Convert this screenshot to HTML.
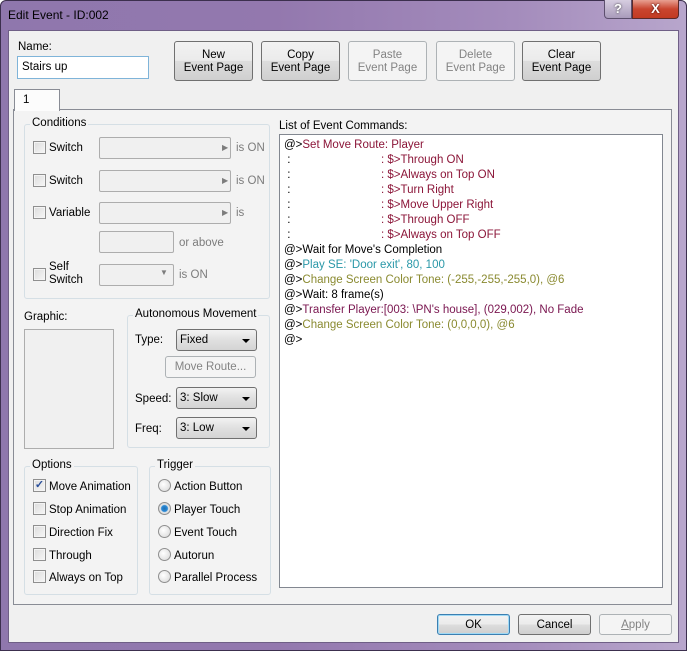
<!DOCTYPE html>
<html><head><meta charset="utf-8"><style>
*{box-sizing:border-box;margin:0;padding:0}
body{width:687px;height:651px;overflow:hidden;font-family:"Liberation Sans",sans-serif;font-size:11.5px;color:#000;background:#fff}
.a{position:absolute}
.frame{left:0;top:0;width:687px;height:651px;background:linear-gradient(90deg,#8f77ad 0%,#9378ae 40%,#a48cbc 75%,#b8a6cc 100%);border:1px solid #3c2f4e;border-radius:6px 6px 0 0}
.client{left:8px;top:30px;width:671px;height:613px;background:#f0f0f0;border:1px solid #6f5f86}
.btn{position:absolute;border:1px solid #707070;border-radius:3px;background:linear-gradient(#f2f2f2 0%,#ebebeb 49%,#dddddd 50%,#cfcfcf 100%);text-align:center;line-height:13px;font-size:11.5px}
.dis{border-color:#adb2b5;background:#f4f4f4;color:#838383}
.grp{position:absolute;border:1px solid #d5dfe5;border-radius:3px}
.lg{position:absolute;background:#f3f3f3;padding:0 2px;top:-8px;left:5px}
.cb{position:absolute;width:13px;height:13px;border:1px solid #8f8f8f;background:linear-gradient(135deg,#dcdcdc,#f6f6f6);box-shadow:inset 0 0 0 1px #f4f4f4}
.rb{position:absolute;width:13px;height:13px;border:1px solid #8f8f8f;border-radius:50%;background:radial-gradient(circle at 40% 40%,#fff,#d6d6d6)}
.combo{position:absolute;border:1px solid #adadad;background:#f0f0f0;border-radius:2px}
.dd{position:absolute;border:1px solid #707070;border-radius:3px;background:linear-gradient(#f2f2f2,#e0e0e0 50%,#d4d4d4);padding-left:3px;line-height:21px}
.dd:after{content:"";position:absolute;right:6px;top:9px;border-left:4px solid transparent;border-right:4px solid transparent;border-top:4px solid #000}
.t{position:absolute;white-space:nowrap}
.g{color:#7c7c7c}
.list div{height:15px;line-height:15px;white-space:nowrap}
.m{color:#8b1538}.c{color:#2a98a8}.o{color:#8a8a30}.p{color:#7a1650}
</style></head><body>
<div class="a frame"></div>
<div class="t" style="left:8px;top:8px;font-size:12px">Edit Event - ID:002</div>
<div class="a" style="left:604px;top:0;width:28px;height:19px;border:1px solid #5d4f6e;border-top:none;border-radius:0 0 0 4px;background:linear-gradient(#d6cde0,#a99bbb);color:#fff;font-weight:bold;text-align:center;line-height:17px;font-size:13px;text-shadow:0 0 2px #333">?</div>
<div class="a" style="left:632px;top:0;width:47px;height:19px;border:1px solid #5a2a2a;border-top:none;border-radius:0 0 4px 0;background:linear-gradient(#e8a091,#c9452f 50%,#c23a22);color:#fff;font-weight:bold;text-align:center;line-height:17px;font-size:13px;text-shadow:0 0 2px #300">X</div>
<div class="a client"></div>

<div class="t" style="left:18px;top:41px">Name:</div>
<div class="a" style="left:17px;top:56px;width:132px;height:23px;border:1px solid #7fb4d9;background:#fff;padding:4px 0 0 4px">Stairs up</div>
<div class="btn" style="left:174px;top:41px;width:79px;height:40px;padding-top:7px">New<br>Event Page</div>
<div class="btn" style="left:261px;top:41px;width:79px;height:40px;padding-top:7px">Copy<br>Event Page</div>
<div class="btn dis" style="left:348px;top:41px;width:79px;height:40px;padding-top:7px">Paste<br>Event Page</div>
<div class="btn dis" style="left:436px;top:41px;width:79px;height:40px;padding-top:7px">Delete<br>Event Page</div>
<div class="btn" style="left:522px;top:41px;width:79px;height:40px;padding-top:7px">Clear<br>Event Page</div>

<div class="a" style="left:13px;top:109px;width:659px;height:496px;border:1px solid #898c95;background:#f3f3f3"></div>
<div class="a" style="left:14px;top:89px;width:46px;height:22px;border:1px solid #898c95;border-bottom:none;background:#fcfcfc;padding:4px 0 0 8px">1</div>

<div class="grp" style="left:24px;top:124px;width:246px;height:175px"><span class="lg">Conditions</span></div>
<div class="cb" style="left:33px;top:141px"></div><div class="t" style="left:49px;top:142px">Switch</div>
<div class="combo" style="left:99px;top:137px;width:132px;height:22px"></div><div class="t g" style="left:222px;top:143px;font-size:8px">▶</div><div class="t g" style="left:236px;top:142px">is ON</div>
<div class="cb" style="left:33px;top:174px"></div><div class="t" style="left:49px;top:175px">Switch</div>
<div class="combo" style="left:99px;top:170px;width:132px;height:22px"></div><div class="t g" style="left:222px;top:176px;font-size:8px">▶</div><div class="t g" style="left:236px;top:175px">is ON</div>
<div class="cb" style="left:33px;top:206px"></div><div class="t" style="left:49px;top:207px">Variable</div>
<div class="combo" style="left:99px;top:202px;width:132px;height:22px"></div><div class="t g" style="left:222px;top:208px;font-size:8px">▶</div><div class="t g" style="left:236px;top:207px">is</div>
<div class="combo" style="left:99px;top:231px;width:75px;height:22px"></div><div class="t g" style="left:179px;top:237px">or above</div>
<div class="cb" style="left:33px;top:268px"></div><div class="t" style="left:49px;top:261px;line-height:13px">Self<br>Switch</div>
<div class="combo" style="left:99px;top:264px;width:75px;height:22px"></div><div class="t g" style="left:160px;top:268px;font-size:8px">▼</div><div class="t g" style="left:179px;top:269px">is ON</div>

<div class="t" style="left:24px;top:311px">Graphic:</div>
<div class="a" style="left:24px;top:329px;width:90px;height:120px;border:1px solid #adadad;background:#f0f0f0"></div>

<div class="grp" style="left:127px;top:315px;width:143px;height:133px"><span class="lg">Autonomous Movement</span></div>
<div class="t" style="left:135px;top:334px">Type:</div>
<div class="dd" style="left:176px;top:329px;width:81px;height:22px">Fixed</div>
<div class="btn dis" style="left:165px;top:356px;width:91px;height:22px;line-height:21px">Move Route...</div>
<div class="t" style="left:135px;top:393px">Speed:</div>
<div class="dd" style="left:176px;top:387px;width:81px;height:22px">3: Slow</div>
<div class="t" style="left:135px;top:423px">Freq:</div>
<div class="dd" style="left:176px;top:417px;width:81px;height:22px">3: Low</div>

<div class="grp" style="left:24px;top:466px;width:114px;height:129px"><span class="lg">Options</span></div>
<div class="cb" style="left:33px;top:479px;color:#2a4f9a;font-size:11px;line-height:11px;text-align:center;font-weight:bold">✓</div><div class="t" style="left:49px;top:481px">Move Animation</div>
<div class="cb" style="left:33px;top:502px"></div><div class="t" style="left:49px;top:504px">Stop Animation</div>
<div class="cb" style="left:33px;top:525px"></div><div class="t" style="left:49px;top:527px">Direction Fix</div>
<div class="cb" style="left:33px;top:548px"></div><div class="t" style="left:49px;top:550px">Through</div>
<div class="cb" style="left:33px;top:570px"></div><div class="t" style="left:49px;top:572px">Always on Top</div>

<div class="grp" style="left:149px;top:466px;width:122px;height:129px"><span class="lg">Trigger</span></div>
<div class="rb" style="left:158px;top:479px"></div><div class="t" style="left:174px;top:481px">Action Button</div>
<div class="rb" style="left:158px;top:502px;background:radial-gradient(circle,#1f6fb4 0,#2b8ad6 3px,#e8e8e8 4px,#d0d0d0 6px)"></div><div class="t" style="left:174px;top:504px">Player Touch</div>
<div class="rb" style="left:158px;top:525px"></div><div class="t" style="left:174px;top:527px">Event Touch</div>
<div class="rb" style="left:158px;top:548px"></div><div class="t" style="left:174px;top:550px">Autorun</div>
<div class="rb" style="left:158px;top:570px"></div><div class="t" style="left:174px;top:572px">Parallel Process</div>

<div class="t" style="left:279px;top:120px">List of Event Commands:</div>
<div class="a list" style="left:279px;top:134px;width:384px;height:454px;border:1px solid #828790;background:#fff;padding:3px 0 0 4px">
<div>@&gt;<span class="m">Set Move Route: Player</span></div>
<div><span style="display:inline-block;width:97px">&nbsp;:</span><span class="m">: $&gt;Through ON</span></div>
<div><span style="display:inline-block;width:97px">&nbsp;:</span><span class="m">: $&gt;Always on Top ON</span></div>
<div><span style="display:inline-block;width:97px">&nbsp;:</span><span class="m">: $&gt;Turn Right</span></div>
<div><span style="display:inline-block;width:97px">&nbsp;:</span><span class="m">: $&gt;Move Upper Right</span></div>
<div><span style="display:inline-block;width:97px">&nbsp;:</span><span class="m">: $&gt;Through OFF</span></div>
<div><span style="display:inline-block;width:97px">&nbsp;:</span><span class="m">: $&gt;Always on Top OFF</span></div>
<div>@&gt;Wait for Move's Completion</div>
<div>@&gt;<span class="c">Play SE: 'Door exit', 80, 100</span></div>
<div>@&gt;<span class="o">Change Screen Color Tone: (-255,-255,-255,0), @6</span></div>
<div>@&gt;Wait: 8 frame(s)</div>
<div>@&gt;<span class="p">Transfer Player:[003: \PN's house], (029,002), No Fade</span></div>
<div>@&gt;<span class="o">Change Screen Color Tone: (0,0,0,0), @6</span></div>
<div>@&gt;</div>
</div>

<div class="btn" style="left:437px;top:614px;width:73px;height:21px;line-height:20px;border-color:#3c7fb1;box-shadow:inset 0 0 0 1px #9fd9f5">OK</div>
<div class="btn" style="left:518px;top:614px;width:73px;height:21px;line-height:20px">Cancel</div>
<div class="btn dis" style="left:599px;top:614px;width:73px;height:21px;line-height:20px"><u>A</u>pply</div>
</body></html>
